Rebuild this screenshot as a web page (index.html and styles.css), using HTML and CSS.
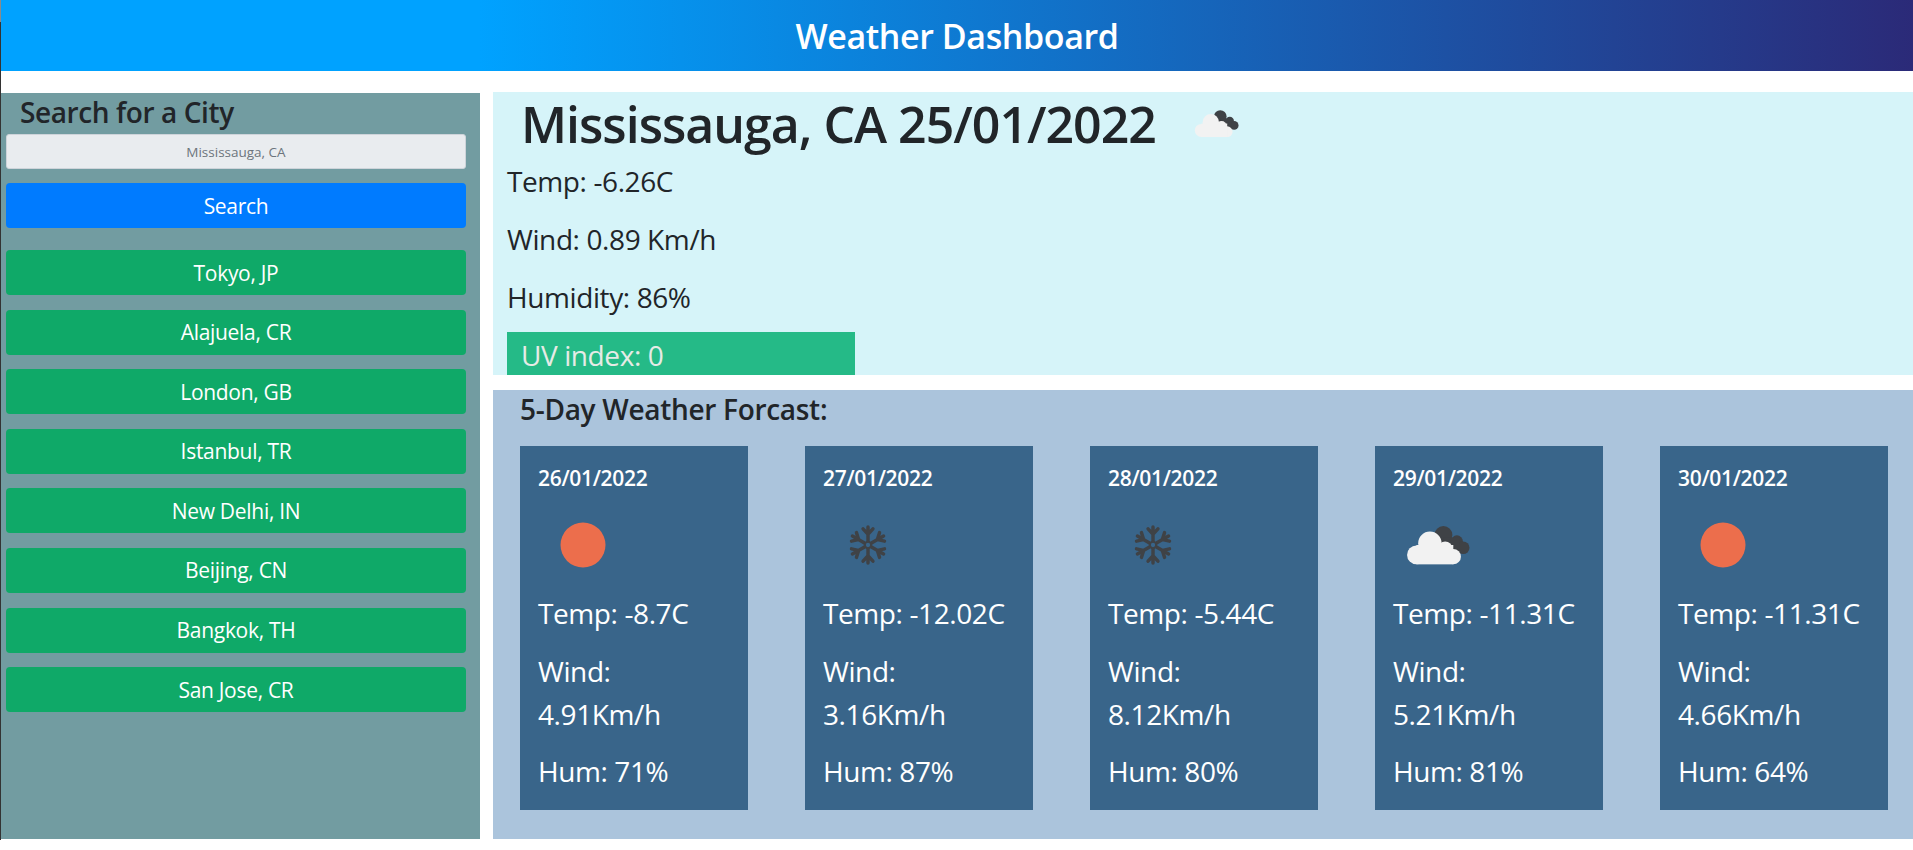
FILE: index.html
```html
<!DOCTYPE html>
<html lang="en">
<head>
  <meta charset="UTF-8" />
  <meta name="viewport" content="width=device-width, initial-scale=1.0" />
  <title>Weather Dashboard</title>
  <link rel="stylesheet" href="styles.css">
</head>
<body>
  <svg class="icon-defs" width="0" height="0">
    <defs>
      <symbol id="sun" viewBox="0 0 100 100">
        <circle cx="50" cy="50" r="25" fill="#ec6e4c" />
      </symbol>
      <symbol id="snow" viewBox="0 0 100 100">
        <g stroke="#3f4246" stroke-width="3.8" stroke-linecap="round" fill="none">
          <path d="M50 45V30M44.5 32l5.5 6 5.5-6" />
          <path d="M50 45V30M44.5 32l5.5 6 5.5-6" transform="rotate(60 50 50)" />
          <path d="M50 45V30M44.5 32l5.5 6 5.5-6" transform="rotate(120 50 50)" />
          <path d="M50 45V30M44.5 32l5.5 6 5.5-6" transform="rotate(180 50 50)" />
          <path d="M50 45V30M44.5 32l5.5 6 5.5-6" transform="rotate(240 50 50)" />
          <path d="M50 45V30M44.5 32l5.5 6 5.5-6" transform="rotate(300 50 50)" />
          <circle cx="50" cy="50" r="3.6" stroke-width="2.4" />
        </g>
      </symbol>
      <symbol id="clouds" viewBox="0 0 100 100">
        <g fill="#3f4246">
          <circle cx="56" cy="39" r="10" />
          <circle cx="71" cy="46" r="6.7" />
          <circle cx="78" cy="53" r="7" />
          <rect x="56" y="42" width="18" height="18" />
        </g>
        <g fill="#f2f2f2">
          <circle cx="41" cy="48" r="13" />
          <circle cx="58" cy="54" r="8" />
          <circle cx="26" cy="61" r="10.4" />
          <circle cx="67" cy="63" r="8.5" />
          <rect x="26" y="50" width="41" height="21.5" />
        </g>
      </symbol>
    </defs>
  </svg>

  <header class="topbar">
    <h1>Weather Dashboard</h1>
  </header>

  <div class="layout">
    <aside class="sidebar">
      <h2>Search for a City</h2>
      <input class="city-input" type="text" placeholder="Mississauga, CA">
      <button class="btn btn-search" type="button">Search</button>
      <div class="history">
        <button class="btn btn-city" type="button">Tokyo, JP</button>
        <button class="btn btn-city" type="button">Alajuela, CR</button>
        <button class="btn btn-city" type="button">London, GB</button>
        <button class="btn btn-city" type="button">Istanbul, TR</button>
        <button class="btn btn-city" type="button">New Delhi, IN</button>
        <button class="btn btn-city" type="button">Beijing, CN</button>
        <button class="btn btn-city" type="button">Bangkok, TH</button>
        <button class="btn btn-city" type="button">San Jose, CR</button>
      </div>
    </aside>

    <main class="content">
      <section class="today">
        <div class="today-head">
          <h2>Mississauga, CA 25/01/2022</h2>
          <svg class="today-icon"><use href="#clouds" /></svg>
        </div>
        <p>Temp: -6.26C</p>
        <p>Wind: 0.89 Km/h</p>
        <p>Humidity: 86%</p>
        <p class="uv">UV index: 0</p>
      </section>

      <section class="forecast">
        <h3>5-Day Weather Forcast:</h3>
        <div class="cards">
          <article class="card">
            <h4>26/01/2022</h4>
            <svg class="card-icon"><use href="#sun" /></svg>
            <p>Temp: -8.7C</p>
            <p>Wind: 4.91Km/h</p>
            <p>Hum: 71%</p>
          </article>
          <article class="card">
            <h4>27/01/2022</h4>
            <svg class="card-icon"><use href="#snow" /></svg>
            <p>Temp: -12.02C</p>
            <p>Wind: 3.16Km/h</p>
            <p>Hum: 87%</p>
          </article>
          <article class="card">
            <h4>28/01/2022</h4>
            <svg class="card-icon"><use href="#snow" /></svg>
            <p>Temp: -5.44C</p>
            <p>Wind: 8.12Km/h</p>
            <p>Hum: 80%</p>
          </article>
          <article class="card">
            <h4>29/01/2022</h4>
            <svg class="card-icon"><use href="#clouds" /></svg>
            <p>Temp: -11.31C</p>
            <p>Wind: 5.21Km/h</p>
            <p>Hum: 81%</p>
          </article>
          <article class="card">
            <h4>30/01/2022</h4>
            <svg class="card-icon"><use href="#sun" /></svg>
            <p>Temp: -11.31C</p>
            <p>Wind: 4.66Km/h</p>
            <p>Hum: 64%</p>
          </article>
        </div>
      </section>
    </main>
  </div>
</body>
</html>
```

FILE: styles.css
```css
* {
  box-sizing: border-box;
}
body {
  margin: 0;
  height: 850px;
  overflow: hidden;
  padding-left: 1px;
  background: white;
  font-family: "Open Sans", "Noto Sans", sans-serif;
  color: #212529;
}
/* thin dark line down the left edge of the window */
body::before {
  content: "";
  position: absolute;
  top: 0;
  left: 0;
  width: 1px;
  height: 840px;
  background: linear-gradient(#8a8a8a 22px, #333 22px);
}
h1, h2, h3, h4, p {
  margin: 0;
}
.icon-defs {
  position: absolute;
}
.topbar {
  height: 71px;
  display: flex;
  align-items: center;
  justify-content: center;
  background: linear-gradient(to right, #00a2ff 25%, #2b2a78 100%);
  color: white;
}
.topbar h1 {
  font-size: 34px;
  font-weight: 600;
  letter-spacing: -0.4px;
}
.layout {
  display: flex;
  gap: 13px;
  margin-top: 21px;
}
.sidebar {
  width: 479px;
  height: 746px;
  margin-top: 1px;
  padding: 0 14px 0 5px;
  background: #729ca1;
}
.sidebar h2 {
  padding-left: 14px;
  font-size: 28px;
  font-weight: 600;
  line-height: 38px;
  letter-spacing: -0.4px;
}
.city-input {
  display: block;
  width: 100%;
  height: 35px;
  margin-top: 3px;
  border: 1px solid #ced4da;
  border-radius: 3px;
  background: #e9ecef;
  text-align: center;
  font-family: inherit;
  font-size: 13.5px;
}
.city-input::placeholder {
  color: #6c757d;
}
.btn {
  display: block;
  width: 100%;
  height: 45px;
  border: none;
  border-radius: 4px;
  color: white;
  font-family: inherit;
  font-size: 21px;
  letter-spacing: -0.3px;
}
.btn-search {
  margin-top: 14px;
  background: #007bff;
}
.history {
  display: flex;
  flex-direction: column;
  gap: 14.6px;
  margin-top: 22px;
}
.btn-city {
  background: #0fa968;
}
.content {
  flex: 1;
  display: flex;
  flex-direction: column;
  gap: 15px;
}
.today {
  height: 283px;
  padding: 0 14px;
  background: #d6f4f9;
  font-size: 28px;
}
.today-head {
  display: flex;
  align-items: center;
  gap: 29px;
  height: 66px;
  padding: 0 0 3px 14px;
}
.today-head h2 {
  font-size: 50px;
  font-weight: 600;
  letter-spacing: -1px;
}
.today-icon {
  width: 63px;
  height: 63px;
}
.today p {
  height: 58px;
  line-height: 46px;
  letter-spacing: -0.4px;
}
.today p.uv {
  width: 348px;
  height: 43px;
  padding-left: 14px;
  line-height: 46px;
  background: #25ba87;
  color: #e6ebe6;
}
.forecast {
  height: 449px;
  padding: 0 25px 0 27px;
  background: #abc4dc;
}
.forecast h3 {
  height: 56px;
  font-size: 28px;
  font-weight: 600;
  line-height: 38px;
  letter-spacing: -0.3px;
}
.cards {
  display: flex;
  justify-content: space-between;
}
.card {
  width: 228px;
  height: 364px;
  padding: 19px 18px 0;
  background: #39658a;
  color: white;
}
.card h4 {
  font-size: 21px;
  font-weight: 600;
  line-height: 26px;
  letter-spacing: -0.3px;
}
.card-icon {
  display: block;
  width: 90px;
  height: 90px;
  margin: 9px 0 2px;
}
.card p {
  margin-bottom: 14.6px;
  font-size: 28px;
  line-height: 43px;
  letter-spacing: -0.4px;
}
```
